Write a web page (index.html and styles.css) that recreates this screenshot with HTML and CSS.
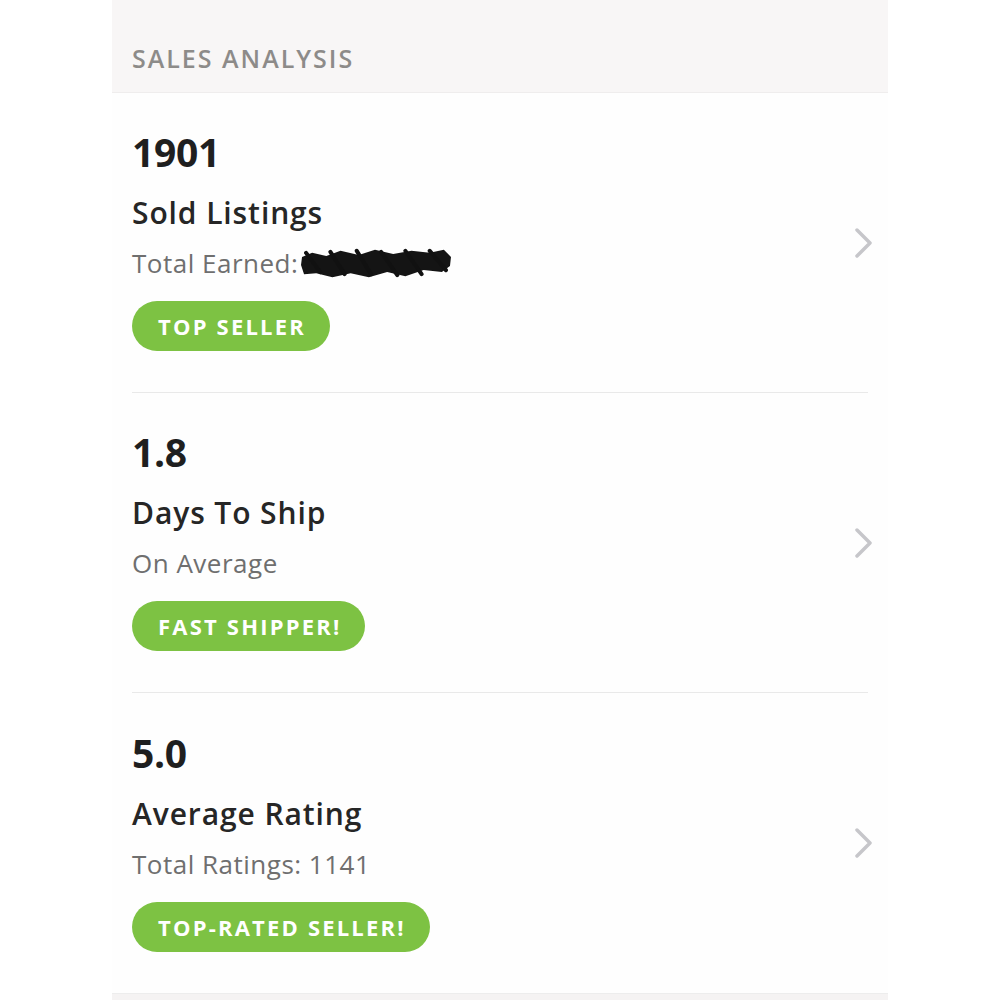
FILE: index.html
```html
<!DOCTYPE html>
<html lang="en">
<head>
<meta charset="utf-8">
<title>Sales Analysis</title>
<link rel="stylesheet" href="styles.css">
</head>
<body>
<main class="panel">
  <header class="section-head">SALES ANALYSIS</header>
  <section class="list">
    <div class="row">
      <div class="info">
        <div class="value">1901</div>
        <div class="title">Sold Listings</div>
        <div class="sub">Total Earned:<svg class="redact" viewBox="0 0 150 30" aria-hidden="true"><path d="M2 9 L12 5 L26 8 L40 3 L58 7 L74 2 L92 6 L110 3 L128 5 L142 2 L149 9 L148 18 L140 24 L122 22 L104 28 L86 24 L68 29 L50 25 L32 29 L16 25 L4 26 L1 17 Z" fill="#141414"/><path d="M6 5 L20 24 M30 4 L44 26 M56 3 L70 26 M80 4 L96 27 M104 3 L120 26 M128 3 L144 22" stroke="#111" stroke-width="4" stroke-linecap="round"/></svg></div>
        <span class="badge">TOP SELLER</span>
      </div>
      <svg class="chev" viewBox="0 0 20 30" aria-hidden="true"><path d="M3 2 L16 15 L3 28" /></svg>
    </div>
    <div class="row">
      <div class="info">
        <div class="value">1.8</div>
        <div class="title">Days To Ship</div>
        <div class="sub">On Average</div>
        <span class="badge">FAST SHIPPER!</span>
      </div>
      <svg class="chev" viewBox="0 0 20 30" aria-hidden="true"><path d="M3 2 L16 15 L3 28" /></svg>
    </div>
    <div class="row last">
      <div class="info">
        <div class="value">5.0</div>
        <div class="title">Average Rating</div>
        <div class="sub">Total Ratings: 1141</div>
        <span class="badge">TOP-RATED SELLER!</span>
      </div>
      <svg class="chev" viewBox="0 0 20 30" aria-hidden="true"><path d="M3 2 L16 15 L3 28" /></svg>
    </div>
  </section>
  <div class="foot"></div>
</main>
</body>
</html>
```
FILE: styles.css
```css
html, body {
  margin: 0;
  padding: 0;
  background: #ffffff;
}
body {
  font-family: "Open Sans", "Liberation Sans", sans-serif;
  color: #222;
}
.panel {
  width: 776px;
  margin: 0 auto;
  background: #fefefe;
}
.section-head {
  height: 93px;
  box-sizing: border-box;
  border-bottom: 1px solid #efeded;
  background: #f8f6f6;
  padding: 23px 0 0 20px;
  display: flex;
  align-items: center;
  font-size: 25px;
  font-weight: 600;
  letter-spacing: 2px;
  color: #8d8b89;
}
.list {
  padding: 0 20px;
}
.row {
  display: flex;
  align-items: center;
  justify-content: space-between;
  height: 300px;
  box-sizing: border-box;
  border-bottom: 1px solid #e9e9e9;
}
.row.last {
  border-bottom: none;
}
.info {
  display: flex;
  flex-direction: column;
  align-items: flex-start;
}
.value {
  font-size: 39px;
  font-weight: 700;
  line-height: 36px;
  letter-spacing: -0.3px;
  color: #1f1f1f;
}
.title {
  margin-top: 23px;
  font-size: 30px;
  font-weight: 600;
  line-height: 40px;
  letter-spacing: 0.9px;
  color: #262626;
}
.sub {
  margin-top: 10px;
  font-size: 26px;
  line-height: 40px;
  letter-spacing: 0.5px;
  color: #6f6f6f;
  display: flex;
  align-items: center;
}
.redact {
  width: 152px;
  height: 32px;
  margin-left: 2px;
}
.badge {
  margin-top: 18px;
  height: 50px;
  box-sizing: border-box;
  padding: 0 24px 0 26px;
  border-radius: 25px;
  background: #7dc243;
  color: #fff;
  font-size: 22px;
  font-weight: 700;
  letter-spacing: 2.2px;
  line-height: 50px;
}
.chev {
  width: 20px;
  height: 30px;
  margin-right: -6px;
  fill: none;
  stroke: #c6c6ca;
  stroke-width: 3.5;
  stroke-linecap: round;
  stroke-linejoin: round;
}
.foot {
  height: 40px;
  background: #f5f3f3;
  border-top: 1px solid #ededed;
}
```
